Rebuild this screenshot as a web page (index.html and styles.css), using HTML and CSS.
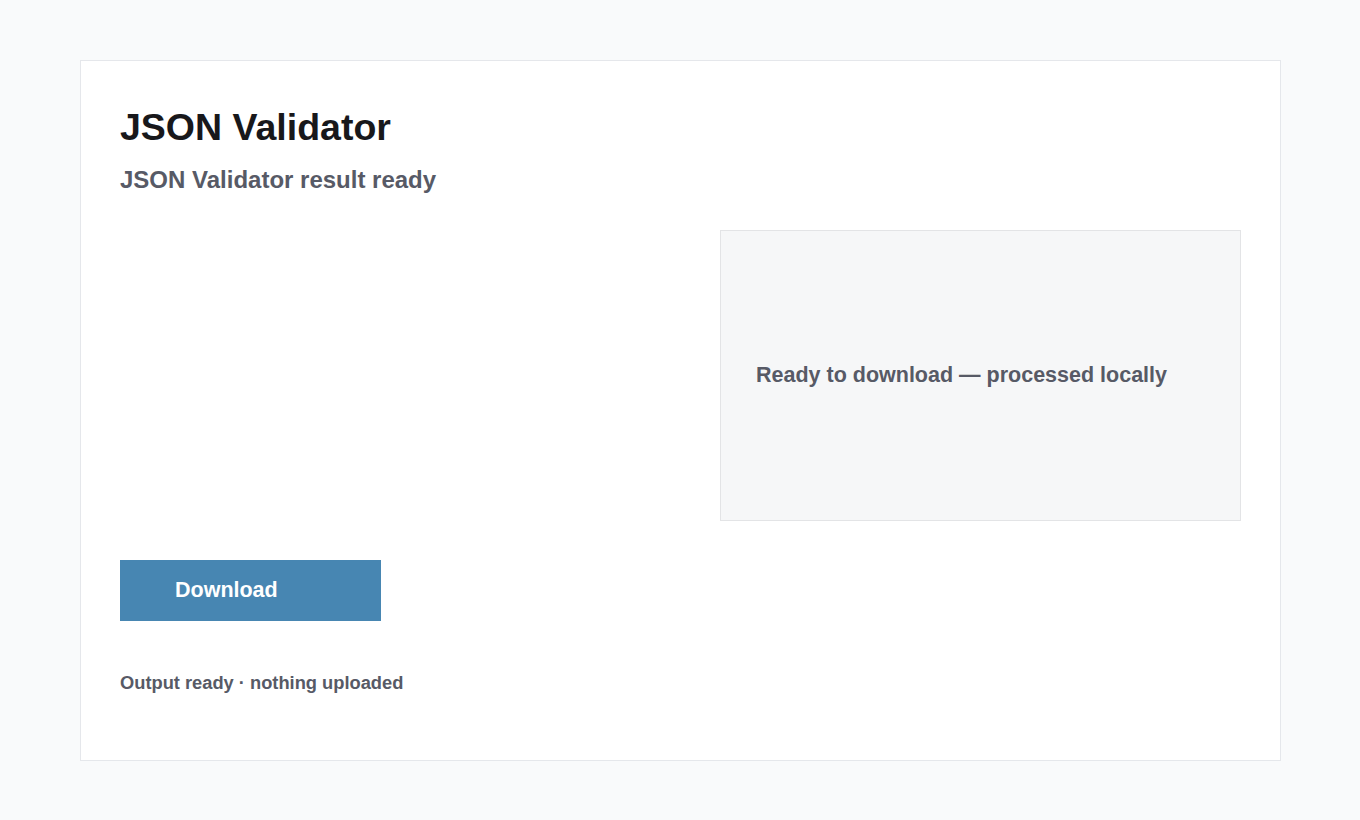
FILE: index.html
```html
<!DOCTYPE html>
<html lang="en">
<head>
    <meta charset="UTF-8">
    <meta name="viewport" content="width=device-width, initial-scale=1.0">
    <title>JSON Validator</title>
    <link rel="stylesheet" href="styles.css">
</head>
<body>
    <div class="card">
        <h1>JSON Validator</h1>
        <h2>JSON Validator result ready</h2>

        <div class="result-row">
            <div class="result-left"></div>
            <div class="preview">Ready to download — processed locally</div>
        </div>

        <button class="download-btn">Download</button>

        <p class="status">Output ready · nothing uploaded</p>
    </div>
</body>
</html>
```

FILE: styles.css
```css
body {
    margin: 0;
    background-color: #f9fafb;
    font-family: "Liberation Sans", Arial, sans-serif;
}
.card {
    box-sizing: border-box;
    width: 1201px;
    height: 701px;
    margin: 60px 80px;
    padding: 39px;
    background-color: #fff;
    border: 1px solid #e5e7eb;
}
h1 {
    margin: 5px 0 0;
    font-size: 37.5px;
    line-height: 1.2;
    color: #18181b;
}
h2 {
    margin: 14px 0 0;
    font-size: 24px;
    line-height: 1.3;
    color: #575a66;
}
.result-row {
    display: grid;
    grid-template-columns: 1fr 521px;
    gap: 80px;
    margin-top: 35px;
}
.preview {
    box-sizing: border-box;
    height: 291px;
    padding: 0 35px;
    display: flex;
    align-items: center;
    background-color: #f6f7f8;
    border: 1px solid #e3e4e6;
    font-size: 21.5px;
    font-weight: bold;
    color: #575a66;
}
.download-btn {
    display: block;
    width: 261px;
    height: 61px;
    margin-top: 39px;
    padding: 0 55px;
    text-align: left;
    border: none;
    background-color: #4786b2;
    color: #fff;
    font-family: inherit;
    font-size: 21.5px;
    font-weight: bold;
}
.status {
    margin: 49px 0 0;
    font-size: 18.3px;
    line-height: 1.4;
    font-weight: bold;
    color: #575a66;
}
```
